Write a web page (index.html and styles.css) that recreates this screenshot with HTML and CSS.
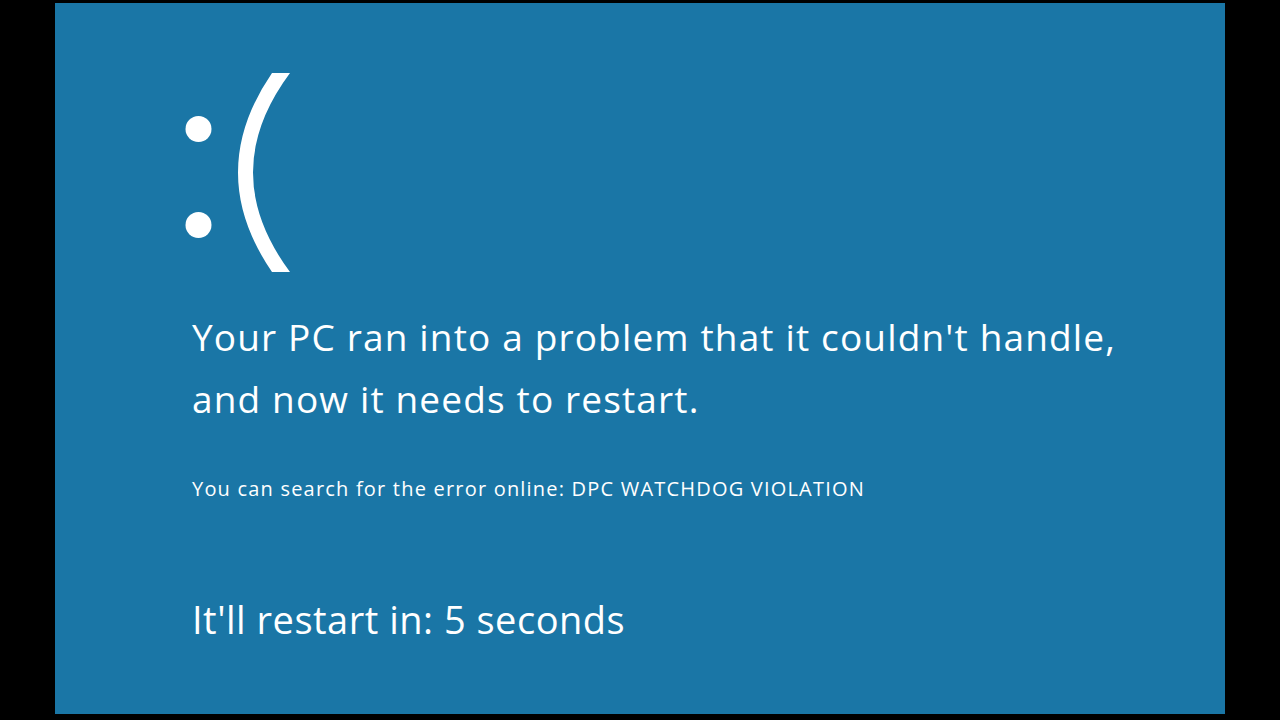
FILE: index.html
```html
<!DOCTYPE html>
<html lang="en">
<head>
    <meta charset="UTF-8">
    <meta name="viewport" content="width=device-width, initial-scale=1.0">
    <title>Your PC ran into a problem</title>
    <link rel="stylesheet" href="styles.css">
</head>
<body>
    <!-- Blue screen -->
    <div class="screen">
        <svg class="face" width="115" height="205" viewBox="0 0 115 205" aria-label=":(">
            <circle cx="18.5" cy="59" r="13" fill="#fff"/>
            <circle cx="18.5" cy="155" r="13" fill="#fff"/>
            <path d="M92 3 Q24 102.5 92 202 L110 202 Q36 102.5 110 3 Z" fill="#fff"/>
        </svg>

        <p class="message">Your PC ran into a problem that it couldn't handle,<br>and now it needs to restart.</p>

        <p class="search">You can search for the error online: DPC WATCHDOG VIOLATION</p>

        <p class="restart">It'll restart in: <span id="seconds">5</span> seconds</p>
    </div>
</body>
</html>
```

FILE: styles.css
```css
body {
    margin: 0;
    height: 100vh;
    background-color: #000;
    font-family: 'Open Sans', sans-serif;
    color: #fff;
    overflow: hidden;
}

.screen {
    box-sizing: border-box;
    width: 1170px;
    height: 711px;
    margin: 3px 0 0 55px;
    padding: 67px 0 0 137px;
    background-color: #1a76a6;
}

.face {
    display: block;
    margin-left: -12px;
}

p {
    margin: 0;
}

.message {
    margin-top: 31px;
    font-size: 37px;
    line-height: 62px;
    letter-spacing: 1.15px;
}

.search {
    margin-top: 45px;
    font-size: 20px;
    line-height: 28px;
    letter-spacing: 1.2px;
}

.restart {
    margin-top: 91px;
    font-size: 38px;
    line-height: 50px;
    letter-spacing: 0.5px;
}
```
